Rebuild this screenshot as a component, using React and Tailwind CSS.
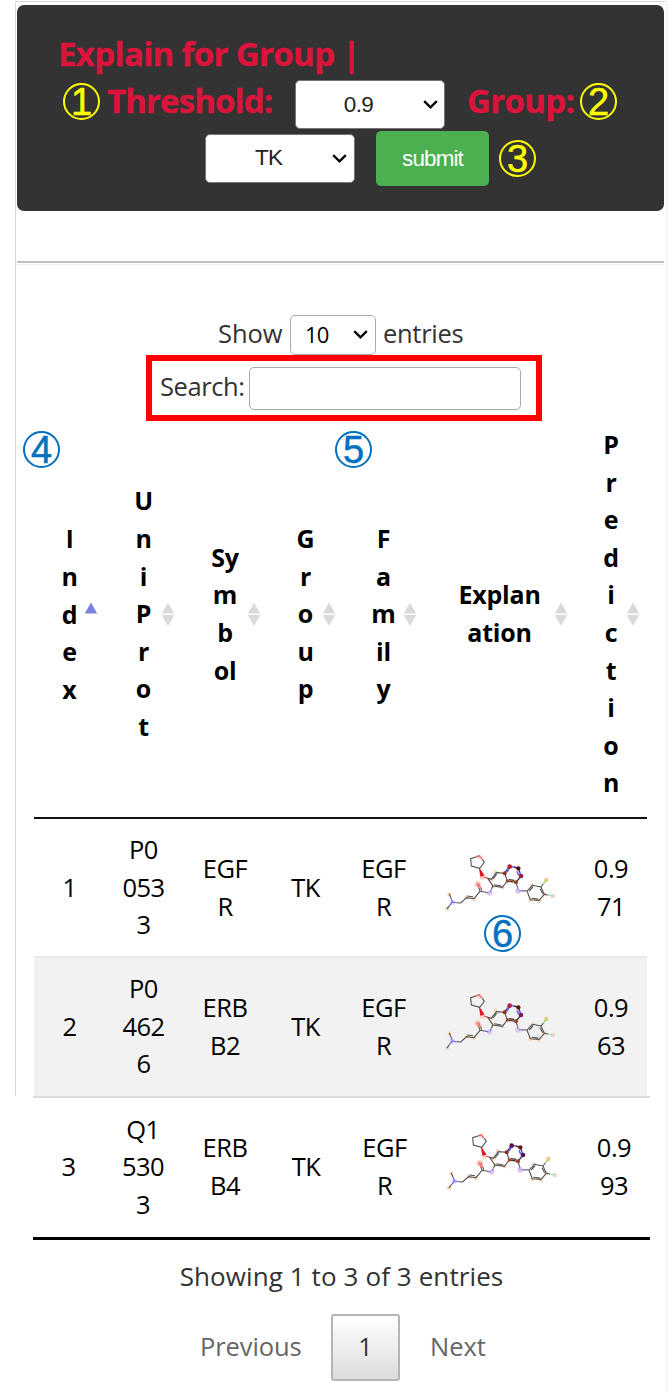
import React from "react";

const columns = [
  { lines: [<span className="font-['Liberation_Sans',sans-serif]">I</span>, "n", "d", "e", "x"], sorted: true },
  { lines: ["U", "n", "i", "P", "r", "o", "t"] },
  { lines: ["Sy", "m", "b", "ol"] },
  { lines: ["G", "r", "o", "u", "p"] },
  { lines: ["F", "a", "m", "il", "y"] },
  { lines: ["Explan", "ation"] },
  { lines: ["P", "r", "e", "d", "i", "c", "t", "i", "o", "n"] },
];

const grid = "grid grid-cols-[71px_77px_86px_75px_81px_151px_72px]";
const wideGrid = "grid grid-cols-[71px_78px_86px_76px_81px_153px_72px]";

const rows = [
  {
    cells: [["1"], ["P0", "053", "3"], ["EGF", "R"], ["TK"], ["EGF", "R"], null, ["0.9", "71"]],
    hot: ["#b5202f", "#54101a", "#a41c3d"],
    box: grid + " h-[139px] border-b-2 border-[#e8e8e8]",
  },
  {
    cells: [["2"], ["P0", "462", "6"], ["ERB", "B2"], ["TK"], ["EGF", "R"], null, ["0.9", "63"]],
    hot: ["#b3203c", "#5a1712", "#7d1c52"],
    box: grid + " h-[138px] bg-[#f2f2f2] pb-[1px]",
  },
  {
    cells: [["3"], ["Q1", "530", "3"], ["ERB", "B4"], ["TK"], ["EGF", "R"], null, ["0.9", "93"]],
    hot: ["#5b1240", "#651a12", "#5b1250"],
    box: wideGrid + " -ml-[1px] h-[144px] w-[617px] border-t-2 border-b-[3px] border-t-[#dcdcdc] border-b-black pb-[1px]",
  },
];

function Chevron() {
  return (
    <svg width="15" height="9" viewBox="0 0 15 9" fill="none" stroke="currentColor" strokeWidth="2.3">
      <path d="M1.2 1.2 7.5 7.3 13.8 1.2" />
    </svg>
  );
}

function Badge({ n, className }) {
  return (
    <span
      className={
        "absolute flex size-[37px] items-center justify-center rounded-full border-2 pt-[1px] font-['Liberation_Sans',sans-serif] text-[38px] leading-none font-normal [-webkit-text-stroke:0.5px_currentColor] " +
        className
      }
    >
      {n}
    </span>
  );
}

function SortIcon({ sorted }) {
  return (
    <svg className="absolute top-[181px] right-[7px]" width="14" height="24" viewBox="0 0 14 24">
      <path d="M7 0.5 13.2 11.5H0.8Z" fill={sorted ? "#7c80dd" : "#dadada"} />
      {!sorted && <path d="M7 24 13.2 13H0.8Z" fill="#dadada" />}
    </svg>
  );
}

function Bond({ d, c = "#505050", w = 3.2 }) {
  return <path d={d} stroke={c} strokeWidth={w} fill="none" />;
}

function Molecule({ hot }) {
  const carbons = [
    [197, 97], [217, 143], [307, 137], [343, 164], [327, 184], [301, 181], [189, 139], [184, 119],
    [58, 164], [51, 207], [110, 173], [132, 178],
  ];
  return (
    <svg className="h-[66px] w-[120px]" viewBox="30 46 360 198">
      {carbons.map(([x, y]) => (
        <circle key={x} cx={x} cy={y} r="6.5" fill="#f8d8bd" />
      ))}
      <circle cx="147" cy="51" r="8" fill="#ffdcd7" />
      <circle cx="157" cy="112" r="8" fill="#ffd0c2" />
      <circle cx="143" cy="134" r="9" fill="#ffc0b8" />
      <circle cx="179" cy="160" r="8" fill="#e4c8f3" />
      <circle cx="264" cy="154" r="8" fill="#dfc4f2" />
      <circle cx="67" cy="188" r="8" fill="#efd0ea" />
      <circle cx="349" cy="121" r="7" fill="#e5cf91" />
      <circle cx="368" cy="169" r="7" fill="#ead5cb" />
      <Bond d="M140 51 122 57 124 79 149 86 163 68 157 59" />
      <Bond d="M140 51 147 48 157 59" c="#f04848" />
      <path d="M148 86 162 107 152 110Z" fill="#e00818" stroke="#e00818" strokeWidth="2" />
      <Bond d="M162 112 173 116" c="#f04848" />
      <Bond d="M173 116 184 119 199 99 224 101 232 124 217 143 189 139Z" />
      <Bond d="M189 118 200 104M193 135 214 139" />
      <Bond d="M224 101 231 90M265 86 269 97M273 109 258 128 232 124" c="#4a3030" w={4} />
      <Bond d="M231 90 238 80 252 82M269 97 273 109 266 118M261 95 266 107M237 88 230 98" c="#5a58f0" w={4.5} />
      <Bond d="M252 82 265 86M253 122 236 120" c="#4a2525" w={4} />
      <Bond d="M258 128 262 141M276 153 291 154" />
      <Bond d="M262 139 264 150M268 154 280 153" c="#6262f0" />
      <Bond d="M291 154 307 137 333 142 343 164 327 182 301 180ZM297 154 309 142M330 147 338 162M305 176 324 178" />
      <Bond d="M333 142 340 133M343 164 354 166" />
      <Bond d="M340 133 347 124" c="#72df30" />
      <Bond d="M354 166 364 168" c="#78dcdc" />
      <Bond d="M189 139 184 149M168 158 150 155 132 177 110 174 92 190 80 189M129 171 112 169M150 155 147 145M155 153 152 144" />
      <Bond d="M184 149 181 157M176 160 167 158" c="#6262f0" />
      <Bond d="M147 147 142 132M152 146 147 132" c="#f05858" />
      <Bond d="M80 189 67 187 63 175M67 187 59 197" c="#6262f0" />
      <Bond d="M63 175 58 163M59 197 51 208" />
      <circle cx="224" cy="101" r="6" fill="#8c2f20" />
      <circle cx="232" cy="124" r="5" fill="#aa4a20" />
      <circle cx="258" cy="128" r="6" fill="#9a4020" />
      <circle cx="239" cy="81" r="7" fill={hot[0]} />
      <circle cx="265" cy="86" r="6.5" fill={hot[1]} />
      <circle cx="273" cy="109" r="7" fill={hot[2]} />
    </svg>
  );
}

function Lines({ lines }) {
  return lines.map((line, i) => <div key={i}>{line}</div>);
}

export default function App() {
  return (
    <main className="relative h-[1392px] w-[668px] overflow-hidden bg-white font-['Open_Sans','Noto_Sans',sans-serif] text-[25px] leading-[37.6px] text-[#333]">
      <div className="flex h-full flex-col pt-[1px] pl-[15px]">
        <div className="h-[1095px] w-[650px] shrink-0 border-t border-l border-[#d8d8d8] pt-[3px] pl-[1px]">
          <header className="relative h-[206px] w-[647px] rounded-[7px] bg-[#333] pt-[28px] text-[33px] font-bold text-[#dc143c]">
            <div className="flex h-[42px] items-center pl-[41px] tracking-[-0.65px] whitespace-pre [-webkit-text-stroke:0.4px_currentColor]">Explain for Group |</div>
            <div className="flex h-[50px] items-center pt-[8px]">
              <span className="mt-[-6px] ml-[90px] w-[188px] tracking-[-0.9px] [-webkit-text-stroke:0.4px_currentColor]">Threshold:</span>
              <div className="mt-[1px] flex h-[49px] w-[150px] items-center justify-end rounded-[5px] border border-[#767676] bg-white pr-[6px] font-['Liberation_Sans',sans-serif] text-[22.5px] font-normal text-black">
                <span className="mt-[1px] mr-[50px] tracking-[-0.7px] text-[#222]">0.9</span>
                <Chevron />
              </div>
              <span className="mt-[-6px] ml-[22px] tracking-[-0.7px] [-webkit-text-stroke:0.4px_currentColor]">Group:</span>
            </div>
            <div className="mt-[5px] flex h-[57px] items-center pl-[188px]">
              <div className="mb-[1px] flex h-[49px] w-[150px] items-center justify-end rounded-[5px] border border-[#767676] bg-white pr-[7px] font-['Liberation_Sans',sans-serif] text-[22.5px] font-normal text-black">
                <span className="mr-[50px] tracking-[-0.9px] text-[#222]">TK</span>
                <Chevron />
              </div>
              <button className="mb-[1px] ml-[21px] h-[55px] w-[113px] rounded-[5px] bg-[#4caf50] pt-[1px] font-['Liberation_Sans',sans-serif] text-[22.5px] font-normal tracking-[-0.9px] text-white">
                submit
              </button>
            </div>
            <Badge n="1" className="top-[78px] left-[46px] border-[#ff0] text-[#ff0]" />
            <Badge n="2" className="top-[78px] left-[563px] border-[#ff0] text-[#ff0]" />
            <Badge n="3" className="top-[135px] left-[482px] border-[#ff0] text-[#ff0]" />
          </header>
          <hr className="mt-[50px] h-[4px] w-[647px] border-t-2 border-b border-t-[#bebebe] border-b-[#eee]" />
          <div className="mt-[49px] flex h-[41px] items-center pl-[201px]">
            <span className="mb-[2px] w-[72px] text-[25.5px] tracking-[-0.1px]">Show</span>
            <div className="flex h-[40px] w-[86px] items-center justify-between rounded-[5px] border border-[#aaa] pr-[7px] pl-[14px] text-[22px] tracking-[-0.8px] text-black">
              10
              <Chevron />
            </div>
            <span className="mb-[2px] ml-[7px] text-[25.5px] tracking-[-0.3px]">entries</span>
          </div>
          <div className="ml-[129px] flex h-[66px] w-[396px] items-center border-[6px] border-[#f00] pl-[8px]">
            <label className="mb-[3px] w-[89px] text-[25.5px] tracking-[-0.4px]">Search:</label>
            <input className="h-[43px] w-[272px] rounded-[5px] border border-[#aaa] bg-white" aria-label="Search" />
          </div>
          <section className="ml-[17px] w-[613px] text-center text-black">
            <div className={grid + " h-[398px] border-b-2 border-[#111] text-[25px] font-bold tracking-[-0.2px]"}>
              {columns.map((col, i) => (
                <div key={i} className="relative flex flex-col items-center justify-center pb-[10px]">
                  <Lines lines={col.lines} />
                  <SortIcon sorted={col.sorted} />
                </div>
              ))}
            </div>
            {rows.map((row, r) => (
              <div key={r} className={row.box}>
                {row.cells.map((cell, i) => (
                  <div key={i} className="flex flex-col items-center justify-center text-[25.5px] tracking-[-0.5px]">
                    {cell ? <Lines lines={cell} /> : <Molecule hot={row.hot} />}
                  </div>
                ))}
              </div>
            ))}
          </section>
        </div>
        <footer className="mt-[162px] text-center">
          <div className="text-[26px] tracking-[0.1px]">Showing 1 to 3 of 3 entries</div>
          <div className="mt-[18px] flex h-[67px] items-center text-[#666]">
            <span className="ml-[185px] w-[131px] text-left text-[25.5px] tracking-[-0.1px]">Previous</span>
            <span className="flex h-[67px] w-[69px] items-center justify-center rounded-[3px] border-2 border-[#b5b5b5] bg-linear-to-b from-white to-[#dcdcdc] text-[#333]">
              1
            </span>
            <span className="ml-[30px] text-[25.5px]">Next</span>
          </div>
        </footer>
      </div>
      <Badge n="4" className="top-[431px] left-[23px] border-[#0070c0] text-[#0070c0]" />
      <Badge n="5" className="top-[431px] left-[335px] border-[#0070c0] text-[#0070c0]" />
      <Badge n="6" className="top-[915px] left-[484px] border-[#0070c0] text-[#0070c0]" />
      <div className="absolute top-0 right-0 h-full w-[3px] bg-[#f8f8f8]" />
    </main>
  );
}
